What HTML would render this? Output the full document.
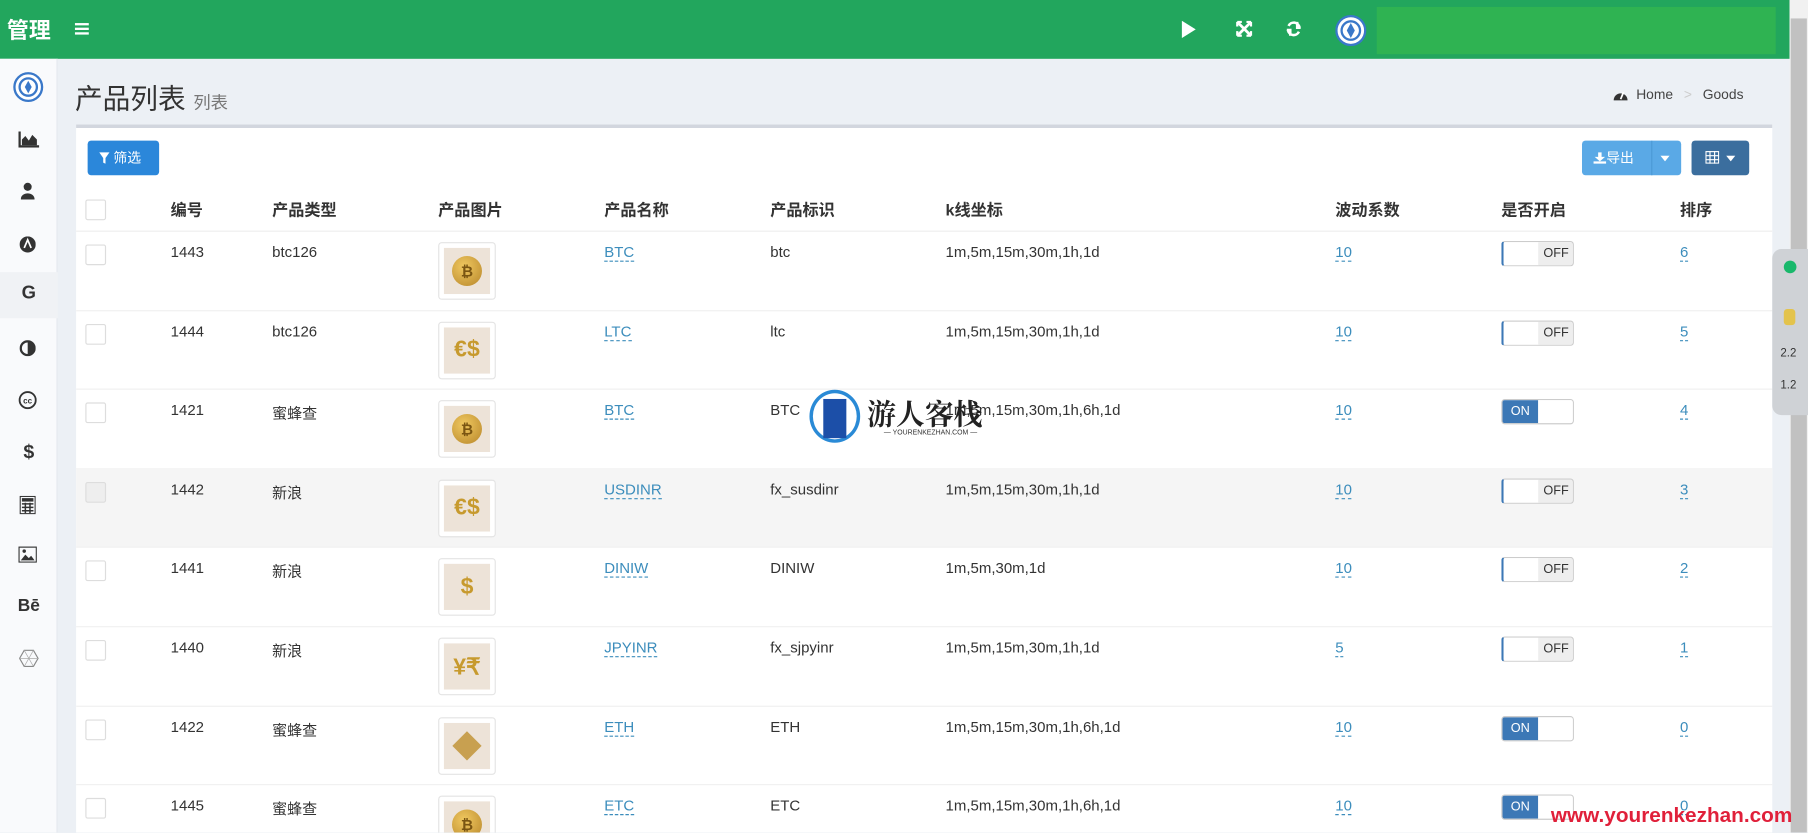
<!DOCTYPE html>
<html><head><meta charset="utf-8"><style>
*{box-sizing:border-box;margin:0;padding:0}
html,body{width:1808px;height:832px;overflow:hidden;background:#ecf0f5}
#w{position:absolute;left:0;top:0;width:1568px;height:722px;overflow:hidden;transform:scale(1.15306);transform-origin:0 0;font-family:"Liberation Sans","Noto Sans CJK SC",sans-serif;color:#333;font-size:13px}
.a{position:absolute}
.hdr{left:0;top:0;width:1552px;height:51px;background:#22a65d}
.sb{left:0;top:51px;width:50px;height:671px;background:#f9fafc;border-right:1px solid #e3e7ee}
.si{position:absolute;left:0;width:50px;text-align:center;color:#333;font-weight:bold;font-size:15px}
.box{left:66px;top:108px;width:1471px;height:614px;background:#fff;border-top:3px solid #d2d6de}
.th{font-weight:bold;font-size:14px;color:#333}
.cb{width:18px;height:18px;border:1px solid #ddd;background:#fff;border-radius:2px}
.lk{color:#3c8dbc;border-bottom:1px dashed #3c8dbc;line-height:15px}
.img{width:50px;height:50px;border:1px solid #e4e4e4;border-radius:3px;background:#fff;padding:4px}
.img div{width:40px;height:40px;background:#ede3d8;display:flex;align-items:center;justify-content:center;color:#c79a2e;font-weight:bold;font-size:20px}
.coin{width:26px!important;height:26px!important;border-radius:50%;background:radial-gradient(circle at 40% 35%,#f0c860,#b7862a)!important;color:#7a5512!important;font-size:13px!important}
.sw{width:63px;height:22px;border:1px solid #ccc;border-radius:3px;overflow:hidden;font-size:11px}
.sw span{position:absolute;top:0;height:20px;line-height:20px;text-align:center;width:31px}
</style></head><body><div id="w">
<div class="a hdr"></div>
<div class="a" style="left:1194px;top:6px;width:346px;height:41px;background:#2fb352"></div>
<div class="a" style="left:6px;top:12px;color:#fff;font-weight:bold;font-size:19px">管理</div>
<div class="a" style="left:65px;top:20px;width:12px;height:2px;background:#fff;box-shadow:0 4px 0 #fff,0 8px 0 #fff"></div>
<svg class="a" style="left:1024px;top:18px" width="14" height="15"><path d="M1 0L13 7.5L1 15Z" fill="#fff"/></svg>
<svg class="a" style="left:1072px;top:18px" width="14" height="14" stroke="#fff" stroke-width="2.4" fill="none"><path d="M2 2L12 12M12 2L2 12"/><path d="M1 1h4M1 1v4M13 1h-4M13 1v4M1 13h4M1 13v-4M13 13h-4M13 13v-4" stroke-width="2"/></svg>
<svg class="a" style="left:1115px;top:18px" width="14" height="14" stroke="#fff" stroke-width="2.2" fill="none"><path d="M12 6A5 5 0 0 0 2.5 4.5M2 8a5 5 0 0 0 9.5 1.5"/><path d="M10 1v5h3M4 13V8H1" fill="#fff"/></svg>
<svg class="a" style="left:1158px;top:13px" width="27" height="27"><circle cx="13.5" cy="13.5" r="12.5" fill="#fff" stroke="#3a78c9" stroke-width="2"/><circle cx="13.5" cy="13.5" r="8" fill="none" stroke="#3a78c9" stroke-width="2"/><path d="M13.5 7L17 13.5 13.5 20 10 13.5Z" fill="#3a78c9"/></svg>
<div class="a" style="left:1552px;top:0;width:16px;height:722px;background:#f1f1f1"></div>
<div class="a" style="left:1553px;top:16px;width:14px;height:706px;background:#c1c1c1"></div>

<div class="a sb"></div>
<div class="a" style="left:0;top:236px;width:50px;height:40px;background:#f0f2f5"></div>
<svg class="a" style="left:11px;top:62px" width="27" height="27"><circle cx="13.5" cy="13.5" r="12" fill="#fff" stroke="#3a78c9" stroke-width="2"/><circle cx="13.5" cy="13.5" r="7.5" fill="none" stroke="#3a78c9" stroke-width="2"/><path d="M13.5 8L16.5 13.5 13.5 19 10.5 13.5Z" fill="#3a78c9"/></svg>
<svg class="a" style="left:16px;top:114px" width="18" height="14"><path d="M1 0v13h17" stroke="#333" stroke-width="2" fill="none"/><path d="M3 12V7l3-3 3 4 3-5 4 4v5Z" fill="#333"/></svg>
<svg class="a" style="left:18px;top:158px" width="12" height="15"><circle cx="6" cy="4" r="3.5" fill="#333"/><path d="M0 15c0-7 12-7 12 0Z" fill="#333"/></svg>
<svg class="a" style="left:17px;top:205px" width="14" height="14"><circle cx="7" cy="7" r="7" fill="#333"/><path d="M4 10L7 3 10 10" stroke="#fff" stroke-width="1.5" fill="none"/></svg>
<div class="si" style="top:246px;font-size:16px">G</div>
<svg class="a" style="left:17px;top:295px" width="14" height="14"><circle cx="7" cy="7" r="6" fill="none" stroke="#333" stroke-width="2"/><path d="M7 1a6 6 0 0 1 0 12Z" fill="#333"/></svg>
<svg class="a" style="left:16px;top:339px" width="16" height="16"><circle cx="8" cy="8" r="7" fill="none" stroke="#333" stroke-width="1.6"/><text x="8" y="11" font-size="7" text-anchor="middle" font-family="Liberation Sans" font-weight="bold" fill="#333">cc</text></svg>
<div class="si" style="top:382px;font-size:17px">$</div>
<svg class="a" style="left:17px;top:430px" width="14" height="16"><rect x="0.5" y="0.5" width="13" height="15" fill="none" stroke="#333"/><rect x="2" y="2" width="10" height="3" fill="#333"/><path d="M2 7h10M2 10h10M2 13h10M5 6v9M9 6v9" stroke="#333" stroke-width="1.3"/></svg>
<svg class="a" style="left:16px;top:474px" width="16" height="14"><rect x="0.5" y="0.5" width="15" height="13" fill="none" stroke="#333"/><path d="M2 12l4-5 3 3 2-2 3 4Z" fill="#333"/><circle cx="5" cy="4" r="1.5" fill="#333"/></svg>
<div class="si" style="top:517px">Bē</div>
<svg class="a" style="left:16px;top:563px" width="18" height="16"><path d="M5 1h8l4 7-4 7H5L1 8Z" fill="none" stroke="#888"/><path d="M1 8h16M5 1l8 14M13 1L5 15" stroke="#aaa" stroke-width=".6"/></svg>

<div class="a" style="left:65px;top:66px;font-size:24px;color:#333">产品列表 <span style="font-size:15px;color:#777">列表</span></div>
<svg class="a" style="left:1399px;top:76px" width="13" height="12"><path d="M0.5 11a6 6 0 1 1 12 0Z" fill="#333"/><path d="M6.5 10L9 4" stroke="#fff" stroke-width="1.5"/></svg>
<div class="a" style="left:1419px;top:75px;font-size:12px;color:#444">Home <span style="color:#ccc;margin:0 6px">&gt;</span> Goods</div>

<div class="a box"></div>
<div class="a" style="left:76px;top:122px;width:62px;height:30px;background:#2b87da;border-radius:3px;color:#fff;font-size:12px;line-height:30px;padding-left:10px"><svg width="9" height="10" style="vertical-align:-1px"><path d="M0 0h9L5.5 5v5L3.5 9V5Z" fill="#fff"/></svg> 筛选</div>
<div class="a" style="left:1372px;top:122px;width:86px;height:30px;background:#5aa9e6;border-radius:3px;color:#fff;font-size:12px;line-height:30px;padding-left:10px"><svg width="11" height="10" style="vertical-align:-1px"><path d="M4 0h3v4h3L5.5 8 1 4h3Z M0 8h11v2H0Z" fill="#fff"/></svg>导出<span class="a" style="left:60px;top:0;width:1px;height:30px;background:#4b9ad6"></span><svg class="a" style="left:68px;top:13px" width="8" height="5"><path d="M0 0h8L4 5Z" fill="#fff"/></svg></div>
<div class="a" style="left:1467px;top:122px;width:50px;height:30px;background:#3b6e9e;border-radius:3px"><svg class="a" style="left:12px;top:9px" width="12" height="11"><rect x=".5" y=".5" width="11" height="10" fill="none" stroke="#fff"/><path d="M0 4h12M0 7.5h12M4 0v11M8 0v11" stroke="#fff"/></svg><svg class="a" style="left:30px;top:13px" width="8" height="5"><path d="M0 0h8L4 5Z" fill="#fff"/></svg></div>

<div class="a" style="left:66px;top:200px;width:1471px;height:1px;background:#eee"></div>
<div class="a cb" style="left:74px;top:173px"></div>
<div class="a th" style="left:148px;top:172px">编号</div>
<div class="a th" style="left:236px;top:172px">产品类型</div>
<div class="a th" style="left:380px;top:172px">产品图片</div>
<div class="a th" style="left:524px;top:172px">产品名称</div>
<div class="a th" style="left:668px;top:172px">产品标识</div>
<div class="a th" style="left:820px;top:172px">k线坐标</div>
<div class="a th" style="left:1158px;top:172px">波动系数</div>
<div class="a th" style="left:1302px;top:172px">是否开启</div>
<div class="a th" style="left:1457px;top:172px">排序</div>

<div id="rows"></div>
<script>
var d=[["1443","btc126","c","BTC","btc","1m,5m,15m,30m,1h,1d","10",0,"6"],
["1444","btc126","€$","LTC","ltc","1m,5m,15m,30m,1h,1d","10",0,"5"],
["1421","蜜蜂查","c","BTC","BTC","1m,5m,15m,30m,1h,6h,1d","10",1,"4"],
["1442","新浪","€$","USDINR","fx_susdinr","1m,5m,15m,30m,1h,1d","10",0,"3"],
["1441","新浪","$","DINIW","DINIW","1m,5m,30m,1d","10",0,"2"],
["1440","新浪","¥₹","JPYINR","fx_sjpyinr","1m,5m,15m,30m,1h,1d","5",0,"1"],
["1422","蜜蜂查","◆","ETH","ETH","1m,5m,15m,30m,1h,6h,1d","10",1,"0"],
["1445","蜜蜂查","c","ETC","ETC","1m,5m,15m,30m,1h,6h,1d","10",1,"0"]];
var h="";
d.forEach(function(r,i){var t=200+i*68.6;
if(i==3)h+='<div class="a" style="left:66px;top:'+t+'px;width:1471px;height:68px;background:#f5f5f5"></div>';
h+='<div class="a" style="left:66px;top:'+(t+68.6)+'px;width:1471px;height:1px;background:#f0f0f0"></div>';
var y=t+11;
h+='<div class="a cb" style="left:74px;top:'+(t+12)+'px;'+(i==3?'background:#eee':'')+'"></div>';
h+='<div class="a" style="left:148px;top:'+y+'px">'+r[0]+'</div>';
h+='<div class="a" style="left:236px;top:'+y+'px">'+r[1]+'</div>';
var im=r[2]=="c"?'<div><div class="coin">₿</div></div>':'<div'+(r[2]=="◆"?' style="color:#c8a050;font-size:26px"':'')+'>'+r[2]+'</div>';
h+='<div class="a img" style="left:380px;top:'+(t+10)+'px">'+im+'</div>';
h+='<div class="a lk" style="left:524px;top:'+y+'px">'+r[3]+'</div>';
h+='<div class="a" style="left:668px;top:'+y+'px">'+r[4]+'</div>';
h+='<div class="a" style="left:820px;top:'+y+'px">'+r[5]+'</div>';
h+='<div class="a lk" style="left:1158px;top:'+y+'px">'+r[6]+'</div>';
h+='<div class="a lk" style="left:1457px;top:'+y+'px">'+r[8]+'</div>';
if(r[7])h+='<div class="a sw" style="left:1302px;top:'+(t+9)+'px"><span style="left:0;background:#3c78b6;color:#fff">ON</span><span style="left:31px;background:#fff"></span></div>';
else h+='<div class="a sw" style="left:1302px;top:'+(t+9)+'px;border-left:2px solid #3c78b6"><span style="left:0;background:#fff"></span><span style="left:30px;background:#eee;color:#333">OFF</span></div>';
});
document.getElementById("rows").innerHTML=h;
</script>

<div class="a" style="left:702px;top:338px;width:44px;height:46px;border:3px solid #2a8ad6;border-radius:50%;background:#fff"></div>
<div class="a" style="left:714px;top:346px;width:20px;height:34px;background:#1c4fa8"></div>
<div class="a" style="left:752px;top:340px;font-size:25px;font-weight:bold;color:#222;font-family:'Noto Serif CJK SC',serif">游人客栈</div>
<div class="a" style="left:752px;top:373px;font-size:6px;color:#333;width:110px;text-align:center">— YOURENKEZHAN.COM —</div>
<div class="a" style="left:1537px;top:216px;width:31px;height:144px;background:#cfd2d6;border-radius:8px 0 0 8px"></div>
<div class="a" style="left:1547px;top:226px;width:11px;height:11px;border-radius:50%;background:#19b86b"></div>
<div class="a" style="left:1547px;top:268px;width:10px;height:14px;background:#e3c34c;border-radius:3px"></div>
<div class="a" style="left:1544px;top:301px;font-size:10px;color:#333">2.2</div>
<div class="a" style="left:1544px;top:329px;font-size:10px;color:#333">1.2</div>
<div class="a" style="left:1345px;top:697px;font-size:18px;font-weight:bold;color:#e0203a">www.yourenkezhan.com</div>
</div></body></html>
